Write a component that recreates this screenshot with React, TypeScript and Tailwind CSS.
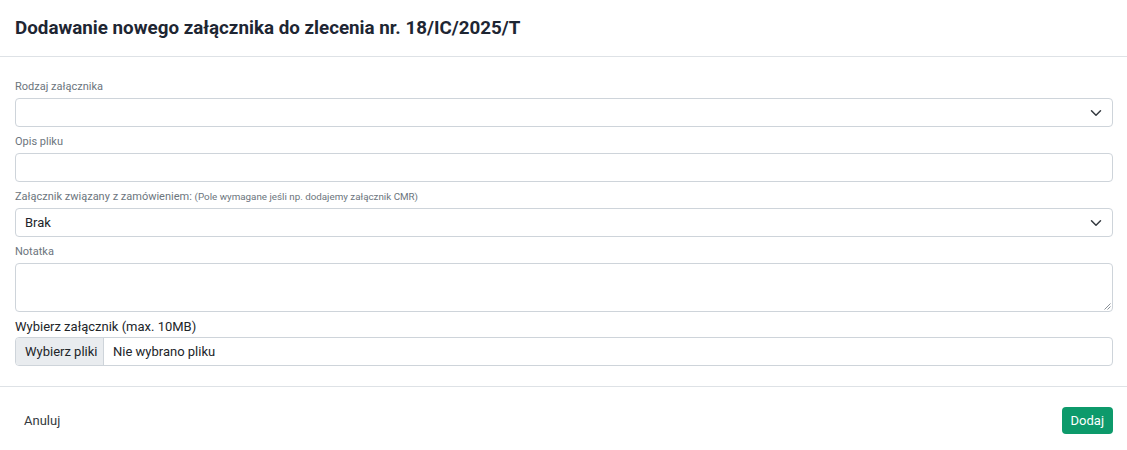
import React from 'react';

const Chevron: React.FC = () => (
  <svg
    className="pointer-events-none absolute right-[11px] top-1/2 h-[12px] w-[12px] -translate-y-1/2 text-[#343a40]"
    viewBox="0 0 16 16"
    fill="none"
    stroke="currentColor"
    strokeWidth={2}
    strokeLinecap="round"
    strokeLinejoin="round"
  >
    <path d="M2 5l6 6 6-6" />
  </svg>
);

const inputBase =
  'w-full rounded-[4px] border border-[#ced4da] bg-white px-[9px] text-[13px] text-[#212529] outline-none';

const App: React.FC = () => {
  return (
    <div className="min-h-[450px] w-full bg-white font-['Roboto',sans-serif] text-[#212529]">
      {/* Header */}
      <div className="flex h-[57px] items-center border-b border-[#dee2e6] px-[15px]">
        <h1 className="text-[18.8px] font-bold leading-none text-[#1e2633]">
          Dodawanie nowego załącznika do zlecenia nr. 18/IC/2025/T
        </h1>
      </div>

      {/* Body */}
      <div className="flex flex-col gap-[7px] border-b border-[#dee2e6] pb-[20px] pl-[15px] pr-[14px] pt-[22px]">
        <div className="flex flex-col">
          <label className="mb-[4px] block h-[15px] text-[11px] leading-[15px] text-[#6c757d]">Rodzaj załącznika</label>
          <div className="relative">
            <div className={`${inputBase} h-[29px]`} />
            <Chevron />
          </div>
        </div>

        <div className="flex flex-col">
          <label className="mb-[4px] block h-[15px] text-[11px] leading-[15px] text-[#6c757d]">Opis pliku</label>
          <div className={`${inputBase} h-[29px]`} />
        </div>

        <div className="flex flex-col">
          <label className="mb-[4px] block h-[15px] text-[11px] leading-[15px] text-[#6c757d]">
            Załącznik związany z zamówieniem: <span className="text-[9.8px] leading-none">(Pole wymagane jeśli np. dodajemy załącznik CMR)</span>
          </label>
          <div className="relative">
            <div className={`${inputBase} flex h-[29px] items-center`}>Brak</div>
            <Chevron />
          </div>
        </div>

        <div className="flex flex-col">
          <label className="mb-[4px] block h-[15px] text-[11px] leading-[15px] text-[#6c757d]">Notatka</label>
          <div className="relative">
            <div className={`${inputBase} h-[49px]`} />
            <svg className="absolute bottom-[2px] right-[2px] h-[8px] w-[8px] text-[#6c757d]" viewBox="0 0 8 8" stroke="currentColor" strokeWidth={0.8}>
              <path d="M7.5 1.5L1.5 7.5M7.5 4.5L4.5 7.5" />
            </svg>
          </div>
        </div>

        <div className="-mt-[1px] flex flex-col">
          <label className="mb-[2px] block h-[17px] text-[13px] leading-[17px] text-[#212529]">Wybierz załącznik (max. 10MB)</label>
          <div className="flex h-[29px] w-full overflow-hidden rounded-[4px] border border-[#ced4da] text-[13px]">
            <div className="flex w-[88px] items-center border-r border-[#ced4da] bg-[#e9ecef] pl-[9px] text-[#212529]">
              Wybierz pliki
            </div>
            <div className="flex items-center pl-[9px]">Nie wybrano pliku</div>
          </div>
        </div>
      </div>

      {/* Footer */}
      <div className="flex items-center justify-between pl-[15px] pr-[14px] pt-[20px]">
        <button className="h-[27px] px-[9px] text-[13px] text-[#343a40]">Anuluj</button>
        <button className="h-[27px] rounded-[4px] bg-[#0d9a6b] px-[9px] text-[13px] text-white">Dodaj</button>
      </div>
    </div>
  );
};

export default App;
